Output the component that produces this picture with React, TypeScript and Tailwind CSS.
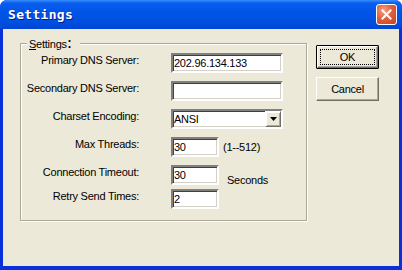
export default function App() {
  const sunken =
    "border-2 border-t-[#808080] border-l-[#808080] border-b-white border-r-white shadow-[inset_1px_1px_0_#404040,inset_-1px_-1px_0_#D4D0C8] bg-white";
  const raised =
    "border border-t-white border-l-white border-b-[#716F64] border-r-[#716F64] shadow-[inset_-1px_-1px_0_#ACA899] bg-[#ECE9D8]";

  const rows = [
    { label: "Primary DNS Server:", mt: "mt-0" },
    { label: "Secondary DNS Server:", mt: "mt-[8px]" },
  ];

  return (
    <div className="w-[402px] h-[270px] bg-white text-[11px] leading-[14px] text-black font-['Liberation_Sans',Arial,sans-serif] tracking-[-0.25px]">
      <div className="w-full h-full flex flex-col rounded-t-[7px] overflow-hidden bg-[#0831D9]">
        {/* Title bar */}
        <div className="h-[29px] shrink-0 flex items-center justify-between pl-[8px] pr-[5px] bg-[linear-gradient(to_bottom,#3B8FFF_0px,#0A5EEE_3px,#0055E6_12px,#0050E0_22px,#0044D2_29px)]">
          <span className="text-white font-bold text-[13px] tracking-[0.3px] font-['DejaVu_Sans_Mono',monospace] [text-shadow:1px_1px_0_#0A1E80]">
            Settings
          </span>
          <div className="w-[21px] h-[21px] rounded-[3px] border border-white bg-[radial-gradient(circle_at_35%_30%,#F4A48A_0%,#E0603E_45%,#C5401F_100%)] flex items-center justify-center">
            <svg width="11" height="11" viewBox="0 0 11 11">
              <path d="M1.5 1.5 L9.5 9.5 M9.5 1.5 L1.5 9.5" stroke="white" strokeWidth="2" strokeLinecap="square" />
            </svg>
          </div>
        </div>

        {/* Body */}
        <div className="flex-1 flex px-[3px] pb-[4px]">
          <div className="flex-1 flex items-start bg-[#ECE9D8] pl-[17px] pt-[14px]">
            {/* Group box */}
            <div className="relative w-[287px] h-[178px] border border-[#ACA899] shadow-[inset_1px_1px_0_white,1px_1px_0_white] pt-[9px]">
              <div className="absolute left-[6px] top-[-8px] px-[2px] bg-[#ECE9D8]">
                <span className="underline underline-offset-[1px]">S</span>ettings
                <span className="font-bold font-['Noto_Sans_CJK_SC',sans-serif]">：</span>
              </div>

              {rows.map((r) => (
                <div key={r.label} className={`flex items-start h-[20px] ${r.mt}`}>
                  <div className="w-[118px] text-right">{r.label}</div>
                  <div className={`ml-[32px] w-[112px] h-[20px] pl-[1px] flex items-center ${sunken}`}>
                    {r.label.startsWith("Primary") ? "202.96.134.133" : ""}
                  </div>
                </div>
              ))}

              <div className="flex items-start h-[20px] mt-[8px]">
                <div className="w-[118px] text-right">Charset Encoding:</div>
                <div className={`ml-[32px] w-[112px] h-[20px] flex items-center ${sunken}`}>
                  <span className="flex-1 pl-[1px]">ANSI</span>
                  <div className={`w-[16px] h-[16px] flex items-center justify-center ${raised} border-t-[#ECE9D8] border-l-[#ECE9D8] shadow-[inset_1px_1px_0_white,inset_-1px_-1px_0_#ACA899]`}>
                    <svg width="7" height="4" viewBox="0 0 7 4">
                      <path d="M0 0 H7 L3.5 4 Z" fill="black" />
                    </svg>
                  </div>
                </div>
              </div>

              <div className="flex items-start h-[20px] mt-[8px]">
                <div className="w-[118px] text-right">Max Threads:</div>
                <div className={`ml-[32px] w-[48px] h-[20px] pl-[1px] flex items-center ${sunken}`}>30</div>
                <div className="ml-[4px] self-center">(1--512)</div>
              </div>

              <div className="flex items-start h-[20px] mt-[8px]">
                <div className="w-[118px] text-right">Connection Timeout:</div>
                <div className={`ml-[32px] w-[48px] h-[20px] pl-[1px] flex items-center ${sunken}`}>30</div>
                <div className="ml-[8px] mt-[8px]">Seconds</div>
              </div>

              <div className="flex items-start h-[20px] mt-[4px]">
                <div className="w-[118px] text-right">Retry Send Times:</div>
                <div className={`ml-[32px] w-[48px] h-[20px] pl-[1px] flex items-center ${sunken}`}>2</div>
              </div>
            </div>

            {/* Buttons */}
            <div className="ml-[9px] pt-[2px] flex flex-col gap-[8px]">
              <div className="w-[63px] h-[24px] border border-black rounded-[1px] p-0">
                <div className={`w-full h-full flex items-center justify-center ${raised} border-b-[#716F64]`}>
                  <div className="w-[55px] h-[16px] border border-dotted border-black flex items-center justify-center">
                    OK
                  </div>
                </div>
              </div>
              <div className={`w-[63px] h-[24px] flex items-center justify-center ${raised}`}>Cancel</div>
            </div>
          </div>
        </div>
      </div>
    </div>
  );
}
